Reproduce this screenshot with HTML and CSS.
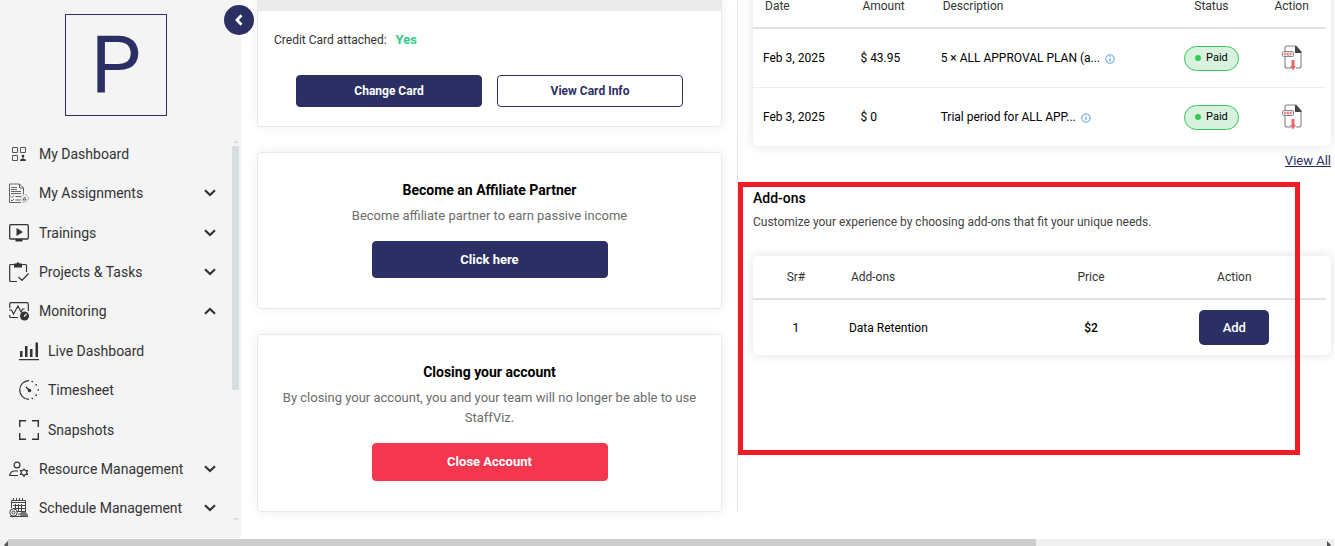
FILE: index.html
```html
<!DOCTYPE html>
<html lang="en">
<head>
<meta charset="utf-8">
<title>Billing</title>
<link rel="stylesheet" href="styles.css">
</head>
<body>
<svg class="defs" aria-hidden="true">
  <symbol id="chevron" viewBox="0 0 12 8"><path d="M1 1.2 6 6 11 1.2" fill="none" stroke="currentColor" stroke-width="2.2"/></symbol>
  <symbol id="info" viewBox="0 0 10 10"><circle cx="5" cy="5" r="4.2" fill="none" stroke="currentColor" stroke-width=".9"/><path d="M5 4.3v3M5 2.4v1" stroke="currentColor"/></symbol>
  <symbol id="pdf" viewBox="0 0 22 26">
    <path d="M4 6V3q0-2 2-2h9l5 6v14q0 2-2 2h-3M10 23H6q-2 0-2-2v-9" fill="none" stroke="#808080" stroke-width="1.100"/>
    <path d="M14 1h1l5.500 6v1H14z" fill="#444"/>
    <rect x="1.5" y="6.5" width="11" height="5" rx="1" fill="#f5f5f5" stroke="#888"/>
    <path d="M3.5 10.500V8h1.500v1.300H3.500M6.500 8v2.300h1.300V8zM9.500 10.500V8H11.300M9.500 9.300h1.500" fill="none" stroke="#ef6a6f" stroke-width=".8"/>
    <path d="M10.500 15h3v6H15l-3 4.500L9 21h1.500z" fill="#e9686c"/>
  </symbol>
</svg>
<div class="app">
  <aside class="sidebar">
    <div class="logo">P</div>
    <button class="toggle" aria-label="Collapse menu"><svg viewBox="0 0 10 12"><path d="M7.500 1.300 3 6l4.500 4.700" fill="none" stroke="currentColor" stroke-width="2.700"/></svg></button>
    <div class="menu">
      <nav class="nav">
        <a href="#"><svg class="icon" viewBox="0 0 20 20"><path d="M3.500 3.500h5v5h-5zM11.500 3.500h5v5h-5zM3.500 11.500h5v5h-5z" fill="none" stroke="#555"/><circle cx="14" cy="12" r="1.300"/><path d="M13.500 13h1v2H16l.8.800v1.200h-5.600v-1.200l.8-.8h1.500z"/></svg><span>My Dashboard</span></a>
        <a href="#"><svg class="icon" viewBox="0 0 20 20"><g fill="none" stroke="#555" stroke-width=".9"><path d="M14.500 11V5l-4-4H.5v18.500H12M10.500 1v4h4M2 4.500h6M2 6.500h6M2 8.500h10M2 10.500h10M6.500 13.500H12M6.500 17H11M2 13.500l1 1 2-2M2 17l1 1 2-2"/><circle cx="15.500" cy="15.500" r="3.800" stroke-dasharray="2 1" stroke="#999"/><path d="M14 17l1.500-3 1.500 3z"/></g></svg><span>My Assignments</span><svg class="chev"><use href="#chevron"/></svg></a>
        <a href="#"><svg class="icon" viewBox="0 0 20 20"><rect x=".7" y="1.700" width="18.600" height="14.300" rx="1" fill="none" stroke="currentColor" stroke-width="1.300"/><path d="M7.500 5 14 9l-6.500 4zM6.500 16h7v2.500h-7z"/></svg><span>Trainings</span><svg class="chev"><use href="#chevron"/></svg></a>
        <a href="#"><svg class="icon" viewBox="0 0 20 20"><path d="M5 2.500H1.700q-1 0-1 1v15q0 1 1 1H8M13 2.500h3.500q1 0 1 1V10M9.500 15l3.500 3.500 6.500-7" fill="none" stroke="currentColor" stroke-width="1.200"/><path d="M5 1.500h2.500Q9-1 10.500 1.500H13v4H5z"/></svg><span>Projects &amp; Tasks</span><svg class="chev"><use href="#chevron"/></svg></a>
        <a href="#"><svg class="icon" viewBox="0 0 20 20"><path d="M.7 7V3q0-1.300 1.300-1.300h16q1.300 0 1.300 1.300v7M.7 14v1.500q0 1 1 1H9M0 9h2.500l2 4L9 5l3 6 1.500-3h2" fill="none" stroke="currentColor" stroke-width="1.200"/><circle cx="15.500" cy="15" r="4.500"/><path d="m15 15.500 2.500-2.500" stroke="#f4f4f4" stroke-width="1.200"/></svg><span>Monitoring</span><svg class="chev up"><use href="#chevron"/></svg></a>
        <a href="#" class="sub"><svg class="icon" viewBox="0 0 20 20"><path d="M1 10h2.500v6H1zM6 5h2.500v11H6zM11 8h2.500v8H11zM16.500 1.500H19V16h-2.500zM0 18h20v1.200H0z"/></svg><span>Live Dashboard</span></a>
        <a href="#" class="sub"><svg class="icon" viewBox="0 0 20 20"><path d="M10 .7A9.300 9.300 0 0 0 10 19.300" fill="none" stroke="currentColor" stroke-width="1.200"/><circle cx="10.500" cy="10.500" r="1.800"/><path d="m7 7 3 3" stroke="currentColor" stroke-width="1.400"/><path d="M12.500 1h1.500v1.300h-1.500zM16.500 4H18v1.500h-1.500zM18.500 9.300H20v1.500h-1.500zM16.500 14.500H18V16h-1.500zM12.500 17.800H14V19h-1.500z"/></svg><span>Timesheet</span></a>
        <a href="#" class="sub"><svg class="icon" viewBox="0 0 20 20"><path d="M.7 7V.7H7M13 .7h6.300V7M19.300 13v6.300H13M7 19.300H.7V13" fill="none" stroke="currentColor" stroke-width="1.400"/></svg><span>Snapshots</span></a>
        <a href="#"><svg class="icon" viewBox="0 0 20 20"><g fill="none" stroke="currentColor" stroke-width="1.200"><circle cx="8" cy="6" r="2.900"/><path d="M9 12H5.500Q1.500 12 .7 16.500H9"/><path d="m15 10 1.300 1.700 2.300-.2-1 2 1 2-2.300-.2L15 17.500l-1.300-2.200-2.300.2 1-2-1-2 2.300.2z" stroke-linejoin="round"/></g></svg><span>Resource Management</span><svg class="chev"><use href="#chevron"/></svg></a>
        <a href="#"><svg class="icon" viewBox="0 0 20 20"><g fill="none" stroke="#444"><path d="M2.500 10V2.500h14V13M2.500 4.500h14M4.500 0v3M7.500 0v3M10.500 0v3M13.500 0v3M4 7.500h12M4 10.500h12M6.500 6v6M9.500 6v7M12.500 6v7M8 13.500h9"/><circle cx="4.500" cy="14.500" r="3.700"/><circle cx="4.500" cy="14.500" r="1.500"/><path d="M9 16.500q4-3 9.500 0v2H1"/></g><path d="M12 14h5l2 4h-8z" fill="#777"/></svg><span>Schedule Management</span><svg class="chev"><use href="#chevron"/></svg></a>
      </nav>
      <div class="vscroll"><i class="arrow"></i><i class="thumb"></i><i class="arrow down"></i></div>
    </div>
  </aside>
  <main class="main">
    <div class="left">
      <section class="card pay">
        <div class="band"></div>
        <p class="attached">Credit Card attached: <b>Yes</b></p>
        <div class="pair"><button class="btn">Change Card</button><button class="btn outline">View Card Info</button></div>
      </section>
      <section class="card promo">
        <h2>Become an Affiliate Partner</h2>
        <p>Become affiliate partner to earn passive income</p>
        <button class="btn wide">Click here</button>
      </section>
      <section class="card promo">
        <h2>Closing your account</h2>
        <p>By closing your account, you and your team will no longer be able to use StaffViz.</p>
        <button class="btn wide danger">Close Account</button>
      </section>
    </div>
    <div class="right">
      <div class="panel top">
        <table class="invoices">
          <thead><tr><th class="c-date">Date</th><th class="c-amount">Amount</th><th>Description</th><th class="c-status mid">Status</th><th class="c-file mid">Action</th></tr></thead>
          <tbody>
            <tr><td>Feb 3, 2025</td><td>$ 43.95</td><td>5 × ALL APPROVAL PLAN (a... <svg class="info"><use href="#info"/></svg></td><td class="mid"><span class="badge">Paid</span></td><td class="mid"><button class="pdf" aria-label="Download PDF"><svg><use href="#pdf"/></svg></button></td></tr>
            <tr><td>Feb 3, 2025</td><td>$ 0</td><td>Trial period for ALL APP... <svg class="info"><use href="#info"/></svg></td><td class="mid"><span class="badge">Paid</span></td><td class="mid"><button class="pdf" aria-label="Download PDF"><svg><use href="#pdf"/></svg></button></td></tr>
          </tbody>
        </table>
      </div>
      <a class="all" href="#">View All</a>
      <section class="addons">
        <h2>Add-ons</h2>
        <p>Customize your experience by choosing add-ons that fit your unique needs.</p>
        <div class="panel">
          <table class="extras">
            <thead><tr><th class="c-sr mid">Sr#</th><th>Add-ons</th><th class="c-price mid">Price</th><th class="c-action mid">Action</th></tr></thead>
            <tbody><tr><td class="mid">1</td><td>Data Retention</td><td class="mid price">$2</td><td class="mid"><button class="add">Add</button></td></tr></tbody>
          </table>
        </div>
        <div class="highlight"></div>
      </section>
    </div>
  </main>
</div>
<div class="hscroll"><i class="harrow"></i><i class="hthumb"></i><i class="harrow end"></i></div>
</body>
</html>
```

FILE: styles.css
```css
* { box-sizing: border-box; }
body {
  margin: 0;
  height: 100vh;
  display: flex;
  flex-direction: column;
  gap: 1px;
  overflow: hidden;
  background: #fff;
  color: #333;
  font: 12px/20px Roboto, "Liberation Sans", sans-serif;
}
h2, p { margin: 0; }
button { font: inherit; cursor: pointer; }
.defs { position: absolute; width: 0; height: 0; }

.app { flex: 1; min-height: 0; display: flex; }

/* Sidebar */
.sidebar {
  position: relative;
  width: 241px;
  flex: none;
  display: flex;
  flex-direction: column;
  padding-top: 14px;
  background: #f4f4f4;
}
.logo {
  width: 102px;
  height: 102px;
  margin-left: 65px;
  border: 1px solid #2c2f63;
  color: #2c2f63;
  font-size: 80px;
  line-height: 100px;
  text-align: center;
}
.toggle {
  position: absolute;
  top: 5px;
  right: -13px;
  width: 30px;
  height: 30px;
  display: grid;
  place-items: center;
  padding: 0;
  border: 0;
  border-radius: 50%;
  background: #2c2f63;
  color: #fff;
}
.toggle svg { width: 10px; height: 12px; }
.menu { flex: 1; min-height: 0; display: flex; padding: 18px 2px 10px 9px; }
.nav { flex: 1; display: flex; flex-direction: column; }
.nav a {
  flex: 1;
  display: flex;
  align-items: center;
  gap: 10px;
  padding-right: 16px;
  color: #333;
  font-size: 14px;
  text-decoration: none;
}
.nav span { flex: 1; }
.nav .sub { padding-left: 10px; gap: 9px; }
.icon { width: 20px; height: 20px; flex: none; fill: currentColor; }
.chev { width: 12px; height: 8px; }
.chev.up { transform: rotate(180deg); }
.vscroll { width: 7px; display: flex; flex-direction: column; align-items: center; padding: 6px 0 7px; }
.thumb { width: 7px; height: 64%; margin: 3px 0 auto; background: #d6dee0; }
.arrow { border: 3px solid transparent; border-top: 0; border-bottom-color: #d6dee0; }
.arrow.down { transform: rotate(180deg); }

/* Main columns */
.main { flex: 1; min-width: 0; display: grid; grid-template-columns: 465fr 594fr; align-items: start; gap: 15px; padding: 0 4px 0 16px; }
.left { display: flex; flex-direction: column; gap: 25px; }
.right { align-self: stretch; display: flex; flex-direction: column; margin-bottom: 26px; padding-left: 15px; border-left: 1px solid #e8e8e8; }

.card { border: 1px solid #e9e9e9; border-radius: 4px; box-shadow: 0 0 12px rgba(0, 0, 0, .07); background: #fff; }
.pay { border-top: 0; border-radius: 0 0 4px 4px; padding-bottom: 19px; }
.band { height: 11px; background: #ebebeb; }
.attached { padding: 19px 17px 25px 16px; }
.attached b { margin-left: 6px; color: #34c98b; font-size: 13px; }
.pair { display: flex; gap: 15px; padding: 0 38px; }
.btn { height: 32px; flex: 1; border: 1px solid #2c2f63; border-radius: 4px; background: #2c2f63; color: #fff; font-weight: 700; }
.btn.outline { background: #fff; color: #2c2f63; }
.promo { display: flex; flex-direction: column; align-items: center; padding: 25px 20px 30px; text-align: center; }
.promo h2 { line-height: 24px; color: #000; font-size: 14px; font-weight: 700; }
.promo p { padding: 4px 0 15px; color: #6c6c6c; font-size: 13px; }
.btn.wide { flex: none; width: 236px; height: 37px; font-size: 13px; }
.btn.danger { height: 38px; border-color: #f5364f; background: #f5364f; }

/* Tables */
.panel { padding-right: 5px; border-radius: 5px; box-shadow: 0 0 12px rgba(0, 0, 0, .12); background: #fff; }
table { width: 100%; table-layout: fixed; border-collapse: separate; border-spacing: 0; }
th { height: 44px; padding: 0 12px; border-bottom: 2px solid #e2e2e2; font-weight: 400; text-align: left; }
td { height: 55px; padding: 0 10px; color: #000; }
.top { margin-top: -15px; }
.invoices td { height: 58px; }
.invoices tbody tr:first-child td { height: 59px; border-bottom: 1px solid #eee; }
.c-date { width: 17%; }
.c-amount { width: 14%; }
.c-status { width: 16%; }
.c-file { width: 12%; }
.c-sr { width: 15%; }
.c-price { width: 18%; }
.c-action { width: 32%; }
.mid { padding: 0; text-align: center; }
.price { font-weight: 500; }
.info { width: 10px; height: 10px; margin-left: 2px; vertical-align: -2px; color: #3d95e0; }
.badge {
  display: inline-flex;
  align-items: center;
  gap: 5px;
  height: 25px;
  padding: 0 10px;
  border: 1px solid #34c759;
  border-radius: 13px;
  background: #d8f2de;
  font-size: 11px;
  vertical-align: middle;
}
.badge::before { content: ""; width: 6px; height: 6px; border-radius: 50%; background: #34c759; }
.pdf { padding: 0; border: 0; background: none; vertical-align: middle; }
.pdf svg { display: block; width: 22px; height: 26px; }
.all { align-self: flex-end; padding: 5px 0 0; color: #2c2f63; font-size: 13px; text-decoration: underline; }

/* Add-ons */
.addons { position: relative; margin-top: 11px; padding-top: 6px; }
.addons h2 { color: #000; font-size: 14px; font-weight: 500; }
.addons p { padding: 4px 0 24px; color: #444; }
.add { width: 70px; height: 35px; border: 0; border-radius: 5px; background: #2c2f63; color: #fff; font-size: 13px; font-weight: 500; vertical-align: middle; }
.highlight { position: absolute; top: 0; left: -15px; right: 31px; height: 273px; border: 5px solid #ee1c24; pointer-events: none; }

/* Window scrollbar */
.hscroll { height: 7px; flex: none; display: flex; align-items: flex-end; overflow: hidden; background: #f0f0f0; }
.hthumb { width: 77%; height: 7px; margin-right: auto; background: #cdcdcd; }
.harrow { width: 8px; margin-bottom: -3px; border: 4px solid transparent; border-left: 0; border-right: 4px solid #555; }
.harrow.end { border-left: 4px solid #555; border-right: 0; }
```
